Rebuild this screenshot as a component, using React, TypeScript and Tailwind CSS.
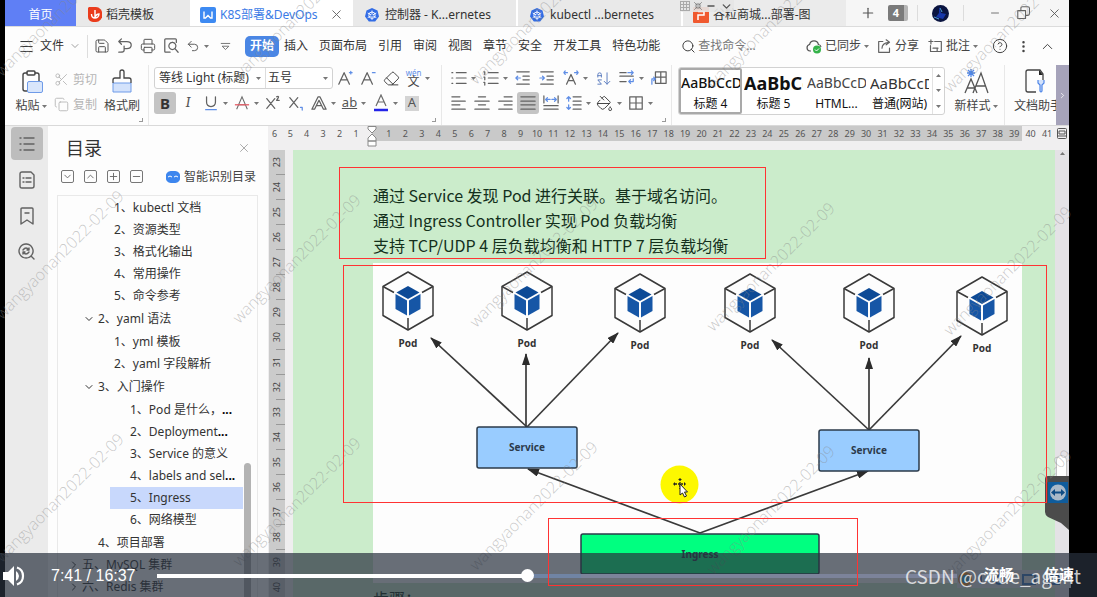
import type { ReactNode } from 'react'
import {
  ArrowDownAZ,
  Bookmark,
  ChevronDown,
  ChevronRight,
  ChevronUp,
  CircleQuestionMark,
  Clipboard,
  Copy,
  EllipsisVertical,
  Eraser,
  Menu,
  Minus,
  PaintBucket,
  Plus,
  Printer,
  Save,
  Scissors,
  Search,
  Undo2,
  X,
} from 'lucide-react'

const menus = ['插入', '页面布局', '引用', '审阅', '视图', '章节', '安全', '开发工具', '特色功能']

type Item = { label: string; more?: boolean; active?: boolean }

const outline: { title?: string; deep?: boolean; items: Item[] }[] = [
  {
    items: [
      { label: '1、kubectl 文档' },
      { label: '2、资源类型' },
      { label: '3、格式化输出' },
      { label: '4、常用操作' },
      { label: '5、命令参考' },
    ],
  },
  { title: '2、yaml 语法', items: [{ label: '1、yml 模板' }, { label: '2、yaml 字段解析' }] },
  {
    title: '3、入门操作',
    deep: true,
    items: [
      { label: '1、Pod 是什么，', more: true },
      { label: '2、Deployment', more: true },
      { label: '3、Service 的意义' },
      { label: '4、labels and sel', more: true },
      { label: '5、Ingress', active: true },
      { label: '6、网络模型' },
    ],
  },
]

const rulerLeft = [5, 4, 3, 2, 1]
const rulerRight = Array.from({ length: 41 }, (_, i) => i + 1)
const rulerDown = Array.from({ length: 18 }, (_, i) => i + 23)

const styleCards = [
  { name: '标题 4', sample: 'AaBbCcDc', look: 'text-[14px] font-medium', on: true },
  { name: '标题 5', sample: 'AaBbCcD', look: 'text-[18px] font-bold' },
  { name: 'HTML...', sample: 'AaBbCcDd', look: 'text-[14px] text-[#444]' },
  { name: '普通(网站)', sample: 'AaBbCcDd', look: 'text-[15px] text-[#333]' },
]

const pods = [
  { x: 408, y: 301 },
  { x: 527, y: 301 },
  { x: 640, y: 303 },
  { x: 750, y: 303 },
  { x: 869, y: 303 },
  { x: 982, y: 306 },
]

const arrows = [
  [527, 427, 431, 338],
  [526, 427, 526, 354],
  [527, 427, 618, 333],
  [869, 430, 772, 340],
  [869, 430, 869, 358],
  [869, 430, 961, 336],
  [700, 533, 528, 469],
  [700, 533, 868, 471],
]

const marks = [-1, 0, 1].flatMap((row) =>
  [0, 1, 2, 3, 4].map((col) => ({ left: col * 237 + 5, top: 303 + row * 243 + col * 4 })),
)

function Caret() {
  return (
    <svg className="h-[3px] w-[5px] shrink-0" viewBox="0 0 5 3">
      <path d="M0 0h5L2.5 3z" fill="#777" />
    </svg>
  )
}

function Tool({ label, on, children }: { label: string; on?: boolean; children: ReactNode }) {
  return (
    <button
      aria-label={label}
      className={`flex h-[22px] w-[22px] items-center justify-center rounded-[3px] ${on ? 'bg-[#c4c4c4]' : ''}`}
    >
      {children}
    </button>
  )
}

function DropTool({ label, children }: { label: string; children: ReactNode }) {
  return (
    <button aria-label={label} className="flex h-[22px] w-[30px] items-center justify-center gap-1">
      {children}
      <Caret />
    </button>
  )
}

function Glyph({ d, accent, box = 18 }: { d: string; accent?: string; box?: number }) {
  return (
    <svg
      width={box}
      height={box}
      viewBox="0 0 18 18"
      fill="none"
      stroke="#626262"
      strokeWidth="1.4"
      strokeLinecap="round"
      strokeLinejoin="round"
      className="shrink-0"
    >
      <path d={d} />
      {accent && <path d={accent} stroke="#5f8ee6" />}
    </svg>
  )
}

function Wheel() {
  return (
    <svg className="h-[14px] w-[14px] shrink-0" viewBox="0 0 14 14">
      <path d="M7 0l5.5 2.6L14 8.500 10.200 13.500H3.800L0 8.500 1.500 2.600z" fill="#326ce5" />
      <g stroke="#fff" strokeWidth="0.9" fill="none">
        <circle cx="7" cy="7.200" r="3.200" />
        <path d="M7 2.500v9.400M2.700 5l8.600 4.600M2.700 9.600L11.300 5" />
      </g>
      <circle cx="7" cy="7.200" r="1" fill="#326ce5" />
    </svg>
  )
}

function TabBar() {
  return (
    <div className="flex h-[27px] items-stretch border-b border-[#dcdcdc] bg-[#f6f6f6] text-xs text-[#333]">
      <button className="w-[71px] shrink-0 bg-[#5f7ff5] pt-[3px] text-white">首页</button>
      <button className="flex w-[114px] shrink-0 items-center gap-1 bg-[#e9e9e9] pt-[3px] pl-3">
        <svg className="h-[15px] w-[14px]" viewBox="0 0 14 15">
          <path d="M1 0h7a6 7 0 0 1 0 15H5a5 5 0 0 1-5-5V1z" fill="#ea3c1c" />
          <path d="M7 3v8M3.500 7c0 3 2 4 3.500 4s4-1 4-4c-2 0-3 1-4 3" fill="none" stroke="#fff" strokeWidth="1.400" />
        </svg>
        稻壳模板
      </button>
      <div className="flex w-[163px] shrink-0 items-center bg-white pt-[3px] pl-[10px] text-[#3b7be6]">
        <svg className="mr-1 h-4 w-4" viewBox="0 0 16 16">
          <rect width="16" height="16" rx="2" fill="#3d8af2" />
          <path d="M4 4.500v6.500h1.500L8 8.500l2.500 2.500H12V4.500" fill="none" stroke="#fff" strokeWidth="1.400" />
        </svg>
        <span className="whitespace-nowrap">K8S部署&amp;DevOps</span>
        <button aria-label="关闭标签" className="ml-auto pr-[9px]">
          <X size={15} strokeWidth={1.5} className="text-[#666]" />
        </button>
      </div>
      <button className="flex w-[165px] shrink-0 items-center gap-1.5 border-r-2 border-white bg-[#e9e9e9] pt-[3px] pl-3 whitespace-nowrap">
        <Wheel />
        控制器 - K...ernetes
      </button>
      <button className="flex w-[165px] shrink-0 items-center gap-1.5 border-r-2 border-white bg-[#e9e9e9] pt-[3px] pl-3 whitespace-nowrap">
        <Wheel />
        kubectl ...bernetes
      </button>
      <button className="flex w-[163px] shrink-0 items-center gap-1 bg-[#ebebeb] pt-[3px] pl-[10px] whitespace-nowrap">
        <svg className="h-4 w-4" viewBox="0 0 16 16">
          <rect width="16" height="16" rx="1" fill="#f0592f" />
          <path d="M5 13V8h6V4.500H5" fill="none" stroke="#fff" strokeWidth="1.500" />
        </svg>
        谷粒商城...部署-图
      </button>
      <div className="flex flex-1 items-center justify-end text-[#555]">
        <button aria-label="新建标签" className="mr-3">
          <Plus size={16} strokeWidth={1.8} />
        </button>
        <button className="mr-[9px] h-4 w-5 rounded-[2px] border-r-4 border-[#b5b5b5] bg-[#7a7a7a] text-[11px] leading-4 font-bold text-white">
          4
        </button>
        <span className="mr-[14px] h-4 w-px bg-[#dcdcdc]" />
        <svg className="mr-[14px] h-[17px] w-[17px]" viewBox="0 0 17 17">
          <circle cx="8.500" cy="8.500" r="8.500" fill="#0a1440" />
          <path d="M7 2l2 6 5 1-3 5-7-2 3-4z" fill="#1636a8" />
          <path d="M8 3l2 4M2 12l5 2" stroke="#4fa0d8" />
        </svg>
        <span className="mr-[25px] h-4 w-px bg-[#dcdcdc]" />
        <button aria-label="最小化" className="mr-4">
          <Minus size={12} strokeWidth={1.6} />
        </button>
        <button aria-label="还原" className="mr-4">
          <Glyph box={14} d="M1 6h10v10H1zM5 6V3q0-2 2-2h7q2 0 2 2v7q0 2-2 2h-3" />
        </button>
        <button aria-label="关闭" className="mr-[7px]">
          <X size={15} strokeWidth={1.4} />
        </button>
      </div>
    </div>
  )
}

function MenuBar() {
  return (
    <div className="flex h-[38px] items-center pl-[13px] text-xs text-[#333]">
      <button className="flex items-center gap-[5px]">
        <Menu size={17} strokeWidth={1.4} />
        文件
        <ChevronDown size={12} strokeWidth={1.4} className="text-[#777]" />
      </button>
      <span className="mx-[6px] h-[23px] w-px bg-[#ddd]" />
      <div className="flex items-center gap-[7px] text-[#555]">
        <button aria-label="保存"><Save size={16} strokeWidth={1.5} /></button>
        <button aria-label="输出为PDF">
          <Glyph box={16} d="M2 4h9q5 0 5 4t-5 4H8M5 1L2 4l3 3M8 12v2q0 2-4 2H2M8 9v3" />
        </button>
        <button aria-label="打印"><Printer size={16} strokeWidth={1.5} /></button>
        <button aria-label="打印预览">
          <Glyph box={16} d="M8 16H3q-1 0-1-1V2q0-1 1-1h11q1 0 1 1v3M10.500 5a4 4 0 1 0 .1 0M13.500 12l3.500 4" />
        </button>
        <button aria-label="撤销" className="flex items-center gap-1">
          <Undo2 size={14} strokeWidth={1.6} />
          <Caret />
        </button>
        <button aria-label="更多" className="ml-1">
          <Glyph box={11} d="M2 4h14M4 9l5 5 5-5z" />
        </button>
      </div>
      <nav className="ml-[14px] flex shrink-0 items-center gap-[11px] whitespace-nowrap">
        <button className="-mr-[6px] h-[21px] w-[34px] rounded-[5px] bg-[#4a86e4] font-bold text-white">开始</button>
        {menus.map((m) => (
          <button key={m}>{m}</button>
        ))}
      </nav>
      <label className="ml-[21px] flex items-center gap-[2px] text-[#666]">
        <Search size={15} strokeWidth={1.5} className="text-[#333]" />
        <input aria-label="查找命令" placeholder="查找命令..." className="w-[72px] bg-transparent outline-none placeholder:text-[#777]" />
      </label>
      <div className="ml-auto flex shrink-0 items-center whitespace-nowrap text-[#444]">
        <button className="flex items-center gap-[3px]">
          <svg width="16" height="15" viewBox="0 0 16 15" fill="none">
            <path d="M5 12H4a3.300 3.300 0 0 1-.4-6.500 4.500 4.500 0 0 1 8.800 0 3 3 0 0 1 2.600 2.500" stroke="#555" strokeWidth="1.200" />
            <circle cx="11" cy="10.500" r="4" fill="#35b34a" />
            <path d="M9 10.500l1.500 1.500 2.500-2.500" stroke="#fff" />
          </svg>
          已同步
          <Caret />
        </button>
        <button className="ml-2 flex items-center gap-[3px]">
          <Glyph box={15} d="M7 3H2v13h13v-5M6 11q0-6 8-7M11 1l4 3-4 3" />
          分享
        </button>
        <button className="ml-[9px] flex items-center gap-[3px]">
          <Glyph box={15} d="M8 3h8v12H3V8M1 3h5M3.500 1v5M6 11h6M11 15v-4" />
          批注
          <Caret />
        </button>
        <button aria-label="帮助" className="ml-[14px]"><CircleQuestionMark size={16} strokeWidth={1.5} /></button>
        <button aria-label="选项" className="ml-2"><EllipsisVertical size={15} /></button>
        <button aria-label="收起功能区" className="mr-[13px] ml-[8px]"><ChevronUp size={17} strokeWidth={1.4} /></button>
      </div>
    </div>
  )
}

function Corner() {
  return <span className="absolute right-[5px] bottom-[3px] h-1 w-1 border-r border-b border-[#999]" />
}

function Ribbon() {
  return (
    <div className="flex h-[60px] text-xs text-[#444]">
      <div className="relative flex w-[144px] shrink-0 items-start border-r border-[#e8e8e8] pl-2">
        <button className="flex w-[36px] flex-col items-center gap-1 pt-1">
          <span className="relative">
            <Clipboard size={24} strokeWidth={1.4} className="text-[#444]" />
            <span className="absolute right-0 bottom-0 h-3 w-4 rounded-[2px] border border-[#6f9be8] bg-[#d9e6fb]" />
          </span>
          <span className="flex items-center gap-[2px] leading-[18px] whitespace-nowrap">粘贴<Caret /></span>
        </button>
        <div className="ml-[5px] flex flex-col text-[#b5b5b5]">
          <button className="flex h-[25px] items-center gap-1 pt-1"><Scissors size={15} strokeWidth={1.4} />剪切</button>
          <button className="flex h-[25px] items-center gap-1 pt-1"><Copy size={15} strokeWidth={1.4} />复制</button>
        </div>
        <button className="ml-[6px] flex w-[38px] flex-col items-center gap-1 pt-1 whitespace-nowrap">
          <svg width="22" height="24" viewBox="0 0 22 24" fill="none">
            <path d="M2 14h18v9H2z" fill="#d3e2fb" stroke="#6f9be8" />
            <path d="M2 14v-3q0-2 2-2h5V3q0-2 2-2t2 2v6h5q2 0 2 2v3" stroke="#444" strokeWidth="1.300" />
          </svg>
          <span className="leading-[18px]">格式刷</span>
        </button>
        <Corner />
      </div>

      <div className="relative flex w-[293px] shrink-0 flex-col gap-[3px] border-r border-[#e8e8e8] pl-[5px]">
        <div className="flex items-center gap-px pt-[2px]">
          <div className="flex h-[22px] w-[179px] rounded-[3px] border border-[#d2d2d2] bg-white text-[#333]">
            <label className="flex w-[111px] items-center border-r border-[#ddd] pr-1 pl-1">
              <select aria-label="字体" className="w-full appearance-none truncate outline-none">
                <option>等线 Light (标题)</option>
              </select>
              <Caret />
            </label>
            <label className="flex flex-1 items-center pr-1 pl-[2px]">
              <select aria-label="字号" className="w-full appearance-none outline-none">
                <option>五号</option>
              </select>
              <Caret />
            </label>
          </div>
          <Tool label="增大字号"><Glyph d="M2 16L8 3l6 13M4 11h8" accent="M14 3h3M15.500 1.500v3" box={16} /></Tool>
          <Tool label="减小字号"><Glyph d="M2 16L8 3l6 13M4 11h8" accent="M14 3h3" box={16} /></Tool>
          <Tool label="清除格式"><Eraser size={17} strokeWidth={1.4} /></Tool>
          <DropTool label="拼音指南">
            <span className="flex flex-col items-center leading-none">
              <span className="h-[7px] text-[8px] leading-[7px] text-[#5f8ee6]">wén</span>
              <span className="h-3 text-xs leading-3">文</span>
            </span>
          </DropTool>
        </div>
        <div className="flex items-center gap-px text-[15px] text-[#555]">
          <Tool label="加粗" on><b className="text-[#333]">B</b></Tool>
          <Tool label="倾斜"><i className="font-serif">I</i></Tool>
          <DropTool label="下划线"><Glyph d="M4 2v6q0 5 5 5t5-5V2" accent="M3 16.500h12" box={16} /></DropTool>
          <DropTool label="删除线">
            <svg width="16" height="16" viewBox="0 0 18 18" fill="none" stroke="#6b6b6b" strokeWidth="1.200">
              <path d="M3 16L9 2l6 14M5 11h8" />
              <path d="M1 11h16" stroke="#e4606a" strokeWidth="1.500" />
            </svg>
          </DropTool>
          <Tool label="上标"><Glyph d="M2 4l9 11M11 4L2 15M13 2q3-1 2 1l-2 3h3" box={16} /></Tool>
          <Tool label="下标"><Glyph d="M2 3l9 11M11 3L2 14" accent="M14 14h2v3" box={16} /></Tool>
          <DropTool label="文字效果"><Glyph d="M1 16L8 2h2l7 14h-3l-5-10-5 10zM6 12h6" box={16} /></DropTool>
          <DropTool label="突出显示">
            <span className="text-[13px] underline">ab</span>
          </DropTool>
          <DropTool label="字体颜色">
            <svg width="16" height="18" viewBox="0 0 16 18" fill="none" stroke="#6b6b6b" strokeWidth="1.200">
              <path d="M3 12L8 1l5 11M5 8h6" />
              <path d="M1 16h14" stroke="#2424e8" strokeWidth="2.500" />
            </svg>
          </DropTool>
          <Tool label="字符底纹">
            <span className="flex h-[15px] w-[14px] items-center justify-center bg-[#d4d4d4] text-[13px]">A</span>
          </Tool>
        </div>
        <Corner />
      </div>

      <div className="relative flex w-[230px] shrink-0 flex-col gap-[3px] border-r border-[#e8e8e8] pl-[6px]">
        <div className="flex items-center gap-0.5 pt-[2px]">
          <DropTool label="项目符号"><Glyph d="M1 3h1M1 9h1M1 15h1M6 3h11M6 9h11M6 15h11" box={16} /></DropTool>
          <DropTool label="编号"><Glyph d="M1 2h1v3M1 8h1v3M1 14h1v3M6 3h11M6 9h11M6 15h11" box={16} /></DropTool>
          <Tool label="减少缩进"><Glyph d="M2 2h14M9 7h7M9 11h7M2 16h14" accent="M6 9H1M3 7L1 9l2 2" box={16} /></Tool>
          <Tool label="增加缩进"><Glyph d="M2 2h14M9 7h7M9 11h7M2 16h14" accent="M1 9h5M4 7l2 2-2 2" box={16} /></Tool>
          <DropTool label="字符缩放"><Glyph d="M4 16L9 5l5 11M6 12h6" accent="M5 3H1M2.500 1L1 3l1.500 2M13 3h4M15.500 1L17 3l-1.500 2" box={16} /></DropTool>
          <Tool label="排序"><ArrowDownAZ size={17} strokeWidth={1.4} className="-scale-x-100 text-[#5f7fc0]" /></Tool>
          <DropTool label="显示标记"><Glyph d="M1 3h7M1 7h15M1 13h7" accent="M10 3h6M14 1l2 2-2 2M16 10v3h-5M13 11l-2 2 2 2" box={16} /></DropTool>
          <Tool label="插入表格"><Glyph d="M5 2h12v13H5zM11 2v13M5 8h12" accent="M1 16v-6h3M3 8l2 2-2 2" box={16} /></Tool>
        </div>
        <div className="flex items-center gap-px">
          <Tool label="左对齐"><Glyph d="M1 2h9M1 7h15M1 11h9M1 16h15" box={16} /></Tool>
          <Tool label="居中"><Glyph d="M5 2h8M1 7h16M5 11h8M1 16h16" box={16} /></Tool>
          <Tool label="右对齐"><Glyph d="M8 2h9M2 7h15M8 11h9M2 16h15" box={16} /></Tool>
          <Tool label="两端对齐" on><Glyph d="M1 2h16M1 7h16M1 11h16M1 16h16" box={16} /></Tool>
          <Tool label="分散对齐"><Glyph d="M1 1v8M17 1v8M1 12h16M1 16h16" accent="M4 5h4M5 3L3 5l2 2M10 5h4M13 3l2 2-2 2" box={16} /></Tool>
          <DropTool label="行距"><Glyph d="M8 2h9M8 7h9M8 11h9M8 16h9" accent="M3 2v5M1 4l2-2 2 2M3 11v5M1 14l2 2 2-2" box={16} /></DropTool>
          <DropTool label="底纹颜色"><PaintBucket size={17} strokeWidth={1.4} /></DropTool>
          <DropTool label="边框"><Glyph d="M2 2h14v14H2zM9 2v14M2 9h14" box={16} /></DropTool>
        </div>
        <Corner />
      </div>

      <div className="mt-[2px] ml-[6px] flex h-[48px] w-[267px] shrink-0 rounded-[3px] border border-[#d2d2d2] bg-white text-[#111]">
        {styleCards.map((c) => (
          <button
            key={c.name}
            className={`flex w-[63px] flex-col items-center overflow-hidden border-2 whitespace-nowrap ${c.on ? 'rounded-[2px] border-[#a9a9a9]' : 'border-transparent'}`}
          >
            <span className={`h-[26px] w-full overflow-hidden text-left leading-[26px] ${c.look}`}>{c.sample}</span>
            <span className="leading-[17px]">{c.name}</span>
          </button>
        ))}
        <div className="ml-auto flex w-3 flex-col items-center justify-around border-l border-[#e2e2e2]">
          <button aria-label="上一行" className="rotate-180"><Caret /></button>
          <button aria-label="下一行"><Caret /></button>
          <button aria-label="展开样式"><Caret /></button>
        </div>
      </div>

      <button className="ml-2 flex w-[46px] shrink-0 flex-col items-center gap-[3px] pt-[3px] whitespace-nowrap">
        <svg width="26" height="26" viewBox="0 0 26 26" fill="none" stroke="#555" strokeWidth="1.300">
          <path d="M2 25L8 11l6 14M4 20h8M10 25L18 5l7 20M13 18h9" />
          <path d="M8 1v8M4 5h8M5 2l6 6M11 2L5 8" stroke="#4f86e8" />
        </svg>
        <span className="flex items-center gap-[2px] leading-[18px]">新样式<Caret /></span>
      </button>
      <div className="ml-auto flex shrink-0 border-l border-[#e8e8e8] pl-[9px]">
        <button className="flex w-[42px] flex-col items-center gap-[3px] overflow-hidden pt-[3px] whitespace-nowrap">
          <svg width="24" height="26" viewBox="0 0 24 26" fill="none">
            <path d="M13 24H5q-2 0-2-2V4q0-2 2-2h12l3 4v6" stroke="#444" strokeWidth="1.300" />
            <path d="M16 2l4 5h-4z" fill="#222" />
            <path d="M15 12v3l2 2v6q1 2 2 0v-6l2-2v-3" fill="#d3e2fb" stroke="#4f86e8" strokeWidth="1.200" />
          </svg>
          <span className="w-full text-left leading-[18px]">文档助手</span>
        </button>
        <button aria-label="向右滚动" className="flex w-[13px] items-center justify-center bg-[#a6a3ba] text-white">
          <ChevronRight size={9} />
        </button>
      </div>
    </div>
  )
}

function Rail() {
  return (
    <div className="flex w-[43px] shrink-0 flex-col items-center gap-[3px] bg-[#ebebeb] pt-px">
      <button aria-label="目录" className="flex h-[33px] w-8 items-center justify-center rounded-[4px] bg-[#bdbdbd]">
        <Glyph d="M2 3h1M2 9h1M2 15h1M6 3h10M6 9h10M6 15h10" />
      </button>
      <button aria-label="章节" className="flex h-[33px] w-8 items-center justify-center">
        <Glyph d="M4 1h9l3 3v11q0 2-2 2H4q-2 0-2-2V3q0-2 2-2M5 7h1M8 7h5M5 11h1M8 11h5" />
      </button>
      <button aria-label="书签" className="flex h-[33px] w-8 items-center justify-center">
        <Glyph d="M3 2q0-1 1-1h10q1 0 1 1v15l-6-4-6 4zM7 6h4" />
      </button>
      <button aria-label="查找" className="flex h-[33px] w-8 items-center justify-center">
        <Glyph d="M8 1a7 7 0 1 0 .1 0M13 13l3 3M5 7q3-4 6 0M11 5v2H9M5 9q3 4 6 0M5 11V9h2" />
      </button>
    </div>
  )
}

function Outline() {
  return (
    <aside className="flex w-[220px] shrink-0 flex-col bg-[#fdfdfd] pr-[10px] pl-[9px] text-xs text-[#333]">
      <div className="flex h-[44px] shrink-0 items-center justify-between pr-[7px] pl-[9px]">
        <h2 className="text-lg">目录</h2>
        <button aria-label="关闭目录"><X size={14} strokeWidth={1.2} className="text-[#888]" /></button>
      </div>
      <div className="mb-3 flex h-[13px] shrink-0 items-center gap-[10px] pl-1 text-[#666]">
        <button aria-label="展开" className="rounded-[2px] border border-[#777]"><ChevronDown size={11} strokeWidth={2} /></button>
        <button aria-label="折叠" className="rounded-[2px] border border-[#777]"><ChevronUp size={11} strokeWidth={2} /></button>
        <button aria-label="增加" className="rounded-[2px] border border-[#777]"><Plus size={11} strokeWidth={2} /></button>
        <button aria-label="减少" className="rounded-[2px] border border-[#777]"><Minus size={11} strokeWidth={2} /></button>
        <button className="ml-auto flex items-center gap-1 pr-[2px] whitespace-nowrap text-[#444]">
          <svg width="14" height="12" viewBox="0 0 14 12">
            <path d="M0 6a5 5 0 0 1 5-6h4a5 5 0 0 1 5 6 5 5 0 0 1-5 6H5a5 5 0 0 1-5-6" fill="#3d86ee" />
            <path d="M2 6q2-2 4 0M8 6q2-2 4 0" fill="none" stroke="#fff" />
          </svg>
          智能识别目录
        </button>
      </div>
      <div className="relative flex-1 border border-b-0 border-[#e9e9e9] whitespace-nowrap">
        {outline.map((group, i) => (
          <section key={i}>
            {group.title && (
              <button className="flex h-[22px] items-center gap-[3px] pl-[25px]">
                <ChevronDown size={12} strokeWidth={2} />
                {group.title}
              </button>
            )}
            <ul className={`py-px ${group.deep ? 'pl-[52px]' : 'pl-9'}`}>
              {group.items.map((item) => (
                <li key={item.label} className={`h-[22px] ${item.active ? 'mr-[14px] bg-[#c8d8fc]' : ''}`}>
                  <a href="#doc" className="block pl-5 leading-[22px]">
                    {item.label}
                    {item.more && <b className="text-black">...</b>}
                  </a>
                </li>
              ))}
            </ul>
          </section>
        ))}
        <button className="block h-[22px] pl-10">4、项目部署</button>
        <button className="flex h-[22px] items-center gap-[2px] pl-[10px]"><ChevronRight size={12} strokeWidth={2} />五、MySQL 集群</button>
        <button className="flex h-[22px] items-center gap-[2px] pl-[10px]"><ChevronRight size={12} strokeWidth={2} />六、Redis 集群</button>
        <span className="absolute top-[267px] right-[6px] bottom-0 w-[7px] rounded-t-full bg-[#b3b3b3]" />
      </div>
    </aside>
  )
}

function Ruler() {
  return (
    <div className="flex h-[24px] shrink-0 items-start bg-[#f0eff0] text-[9px] leading-[15px] text-[#555]">
      <span className="w-[14px] pl-1">6</span>
      <div className="flex flex-1">
        {rulerLeft.map((n) => (
          <span key={n} className="flex-1 basis-0 text-center">{n}</span>
        ))}
        <span className="flex h-[15px] flex-1 basis-0 justify-center bg-linear-to-r from-transparent from-50% to-[#c9c9c9] to-50%">
          <svg width="10" height="21" viewBox="0 0 10 21" className="shrink-0" fill="#fff" stroke="#888">
            <path d="M1 .5h8V3L5 7 1 3zM1 15v-3l4-4 4 4v3zM1 15h8v5H1z" />
          </svg>
        </span>
        {rulerRight.map((n) => (
          <span key={n} className={`flex-1 basis-0 text-center ${n < 40 ? 'bg-[#c9c9c9]' : ''}`}>{n}</span>
        ))}
      </div>
      <svg width="14" height="15" viewBox="0 0 14 15" fill="none" stroke="#555">
        <rect x="2.500" y="2.500" width="9" height="10" rx="1" />
        <path d="M4 5h6v3H4zM3 10h8" />
      </svg>
    </div>
  )
}

function Pod({ x, y }: { x: number; y: number }) {
  return (
    <g transform={`translate(${x} ${y})`}>
      <g fill="none" stroke="#3a3a3a" strokeWidth="1.500" strokeLinejoin="round">
        <path d="M0-29L25-14.500V14.500L0 29-25 14.500V-14.500z" />
        <path d="M-25-14.500l11 6M25-14.500l-11 6M0 29V17" />
      </g>
      <path d="M0-15L11.500-8.500 0-2-11.500-8.500z" fill="#0d4a96" />
      <path d="M-12.500-7L-1-.5V14.500L-12.500 8z" fill="#1656a6" />
      <path d="M12.500-7L1-.5V14.500L12.500 8z" fill="#1656a6" />
      <text y="46" textAnchor="middle" className="fill-[#333] text-[10px] font-bold">Pod</text>
    </g>
  )
}

function Diagram() {
  return (
    <svg viewBox="373 263 649 320" className="mt-[5px] block w-[649px] bg-[#fdfdfd] font-['Noto_Sans',sans-serif]">
      <defs>
        <marker id="head" markerUnits="userSpaceOnUse" markerWidth="12" markerHeight="8" refX="11" refY="4" orient="auto">
          <path d="M0 0l12 4-12 4z" fill="#2c2c2c" />
        </marker>
      </defs>
      {pods.map((p) => (
        <Pod key={p.x} x={p.x} y={p.y} />
      ))}
      {arrows.map(([x1, y1, x2, y2]) => (
        <line key={`${x1}-${x2}`} x1={x1} y1={y1} x2={x2} y2={y2} stroke="#3a3a3a" strokeWidth="1.700" markerEnd="url(#head)" />
      ))}
      <g stroke="#2b3a4a" strokeWidth="1.500">
        <rect x="477" y="427" width="100" height="41" rx="2" fill="#99ccff" />
        <rect x="819" y="430" width="100" height="41" rx="2" fill="#99ccff" />
        <rect x="581" y="534" width="238" height="40" rx="2" fill="#00ff80" />
      </g>
      <g textAnchor="middle" className="fill-[#2b3a4a] text-[10px] font-bold">
        <text x="527" y="451">Service</text>
        <text x="869" y="454">Service</text>
        <text x="700" y="558">Ingress</text>
      </g>
    </svg>
  )
}

function Document() {
  return (
    <div className="flex min-w-0 flex-1 flex-col bg-[#efeeef]">
      <Ruler />
      <div className="flex min-h-0 flex-1">
        <div className="mr-2 ml-px w-4 shrink-0 overflow-hidden bg-[#cbcbcb] text-[9px] text-[#444]">
          {rulerDown.map((n) => (
            <div key={n} className="flex h-[25px] items-center justify-center bg-[linear-gradient(#999,#999)] bg-[length:9px_1px] bg-bottom-right bg-no-repeat">
              <span className="rotate-180 [writing-mode:vertical-rl]">{n}</span>
            </div>
          ))}
        </div>
        <main id="doc" className="min-w-0 flex-1 overflow-hidden bg-[#cbeccb] pt-[33px] pl-[80px] font-['Noto_Sans_CJK_SC',sans-serif] text-base leading-[25px] whitespace-nowrap text-[#14301c]">
          <p>通过 Service 发现 Pod 进行关联。基于域名访问。</p>
          <p>通过 Ingress Controller 实现 Pod 负载均衡</p>
          <p>支持 TCP/UDP 4 层负载均衡和 HTTP 7 层负载均衡</p>
          <Diagram />
          <p className="pt-[3px]">步骤：</p>
        </main>
        <div className="flex w-[14px] shrink-0 justify-center bg-[#e4e2e6] pt-[2px]">
          <span className="rotate-180 self-start"><Caret /></span>
        </div>
      </div>
    </div>
  )
}

function FloatingBits() {
  return (
    <>
      {/* screen share toolbar */}
      <div className="absolute top-0 left-[680px] flex h-[12px] w-[54px] items-center gap-1 rounded-b-[3px] bg-[#e6e6e6]/90 text-[#555]">
        <svg width="10" height="10" viewBox="0 0 10 10" className="shrink-0" stroke="#aaa">
          <path d="M.5 0v10M3.500 0v10M6.500 0v10M9.500 0v10M0 .5h10M0 3.500h10M0 6.500h10M0 9.500h10" />
        </svg>
        <Glyph box={8} d="M1 1l6 6V3M7 7H3M17 1l-6 6V3M11 7h4M1 17l6-6v4M7 11H3M17 17l-6-6v4M11 11h4" />
        <Minus size={10} strokeWidth={4} className="shrink-0" />
        <ChevronDown size={13} strokeWidth={2.500} className="shrink-0" />
      </div>

      {/* mouse highlight */}
      <svg className="absolute top-[465px] left-[660px] h-[39px] w-[39px]" viewBox="0 0 39 39">
        <circle cx="19.500" cy="19.500" r="19" fill="#fdf800" />
        <path d="M20 14v10M15 19h10" stroke="#222" strokeWidth="1.300" strokeDasharray="2 1" />
        <path d="M20 13l2 2h-4zM13 19l2-2v4zM26 19l-2-2v4z" fill="#222" />
        <path d="M20 19v11l2.500-2 2 4 2-1-2-4h3z" fill="#fff" stroke="#222" />
      </svg>

      {/* remote desktop handle */}
      <div className="absolute top-[455px] right-[30px] h-[21px] w-[11px] rounded-t-full border border-b-0 border-[#c4c4c4] bg-white" />
      <svg className="absolute top-[476px] right-[28px] h-[54px] w-6" viewBox="0 0 24 54">
        <path d="M0 3q0-3 3-3h21v54l-8-7-13-6q-3-2-3-5z" fill="#4b4b4b" />
        <rect x="3" y="6" width="20" height="21" fill="#0f5c9c" />
        <circle cx="13" cy="16.500" r="8" fill="#a9b9c8" />
        <path d="M6 16.500l4-3.500v2.500h6V13l4 3.500-4 3.500v-2.500h-6V20z" fill="#0f4c84" />
      </svg>

      {/* input method bar */}
      <svg className="absolute right-[26px] bottom-[9px] h-[18px] w-[114px] bg-[#e4e6ec]" viewBox="0 0 114 18">
        <circle cx="8" cy="9" r="7" fill="#e58b2a" />
        <circle cx="8" cy="9" r="4" fill="#3aa3c9" />
        <path d="M24 4v10M42 6a4 4 0 1 0 .1 0M66 5h12v9H66zM92 5h10v9H92z" stroke="#3b78c4" strokeWidth="2" fill="none" />
      </svg>
    </>
  )
}

function PlayerBar() {
  return (
    <div className="absolute inset-x-0 bottom-0 flex h-11 items-center bg-[#28313d]/70 pt-px font-['Liberation_Sans','Noto_Sans_CJK_SC',sans-serif] text-white">
      <button aria-label="静音" className="ml-[3px] w-[22px]">
        <svg width="22" height="20" viewBox="0 0 22 20" fill="#fff">
          <path d="M0 6h5l6-6v20l-6-6H0zM13 5q3 2 3 5t-3 5z" />
          <path d="M14 1.500q6 2 6 8.500t-6 8.500" fill="none" stroke="#fff" strokeWidth="2.200" />
        </svg>
      </button>
      <span className="ml-[26px] w-[106px] text-base whitespace-pre">7:41 / 16:37</span>
      <input
        type="range"
        aria-label="播放进度"
        min={0}
        max={997}
        defaultValue={461}
        className="h-1 min-w-0 flex-1 appearance-none bg-[linear-gradient(to_right,#fff_46%,#7084a4_46%,#7084a4_53%,#7c839a_53%)] [&::-webkit-slider-thumb]:h-[13px] [&::-webkit-slider-thumb]:w-[13px] [&::-webkit-slider-thumb]:appearance-none [&::-webkit-slider-thumb]:rounded-full [&::-webkit-slider-thumb]:bg-white"
      />
      <button className="ml-[27px] w-[30px] text-[15px] font-bold">流畅</button>
      <button className="mr-[23px] ml-[30px] w-[30px] text-[15px] font-bold">倍速</button>
    </div>
  )
}

export default function App() {
  return (
    <div className="relative flex h-screen flex-col overflow-hidden bg-black pr-7 pl-[5px] font-['Noto_Sans','Noto_Sans_CJK_SC',sans-serif]">
      <header className="border-b border-[#d9d9d9] bg-[#fdfdfd]">
        <TabBar />
        <MenuBar />
        <Ribbon />
      </header>
      <div className="flex min-h-0 flex-1">
        <Rail />
        <Outline />
        <Document />
      </div>

      <FloatingBits />

      {marks.map((m) => (
        <span
          key={`${m.left}-${m.top}`}
          className="pointer-events-none absolute origin-bottom-left -rotate-45 font-['Open_Sans',sans-serif] text-base leading-5 font-light whitespace-nowrap text-[#888]/45"
          style={m}
        >
          wangyaonan2022-02-09
        </span>
      ))}

      <PlayerBar />

      <div className="absolute top-[167px] left-[339px] h-[92px] w-[427px] border border-[#f33]" />
      <div className="absolute top-[265px] left-[343px] h-[238px] w-[704px] border border-[#f33]" />
      <div className="absolute top-[518px] left-[548px] h-[68px] w-[310px] border border-[#f33]" />

      <span className="absolute right-4 bottom-[9px] font-['Noto_Sans_CJK_SC',sans-serif] text-[19px] leading-6 whitespace-nowrap text-white/75">
        CSDN @code_agent
      </span>
    </div>
  )
}
